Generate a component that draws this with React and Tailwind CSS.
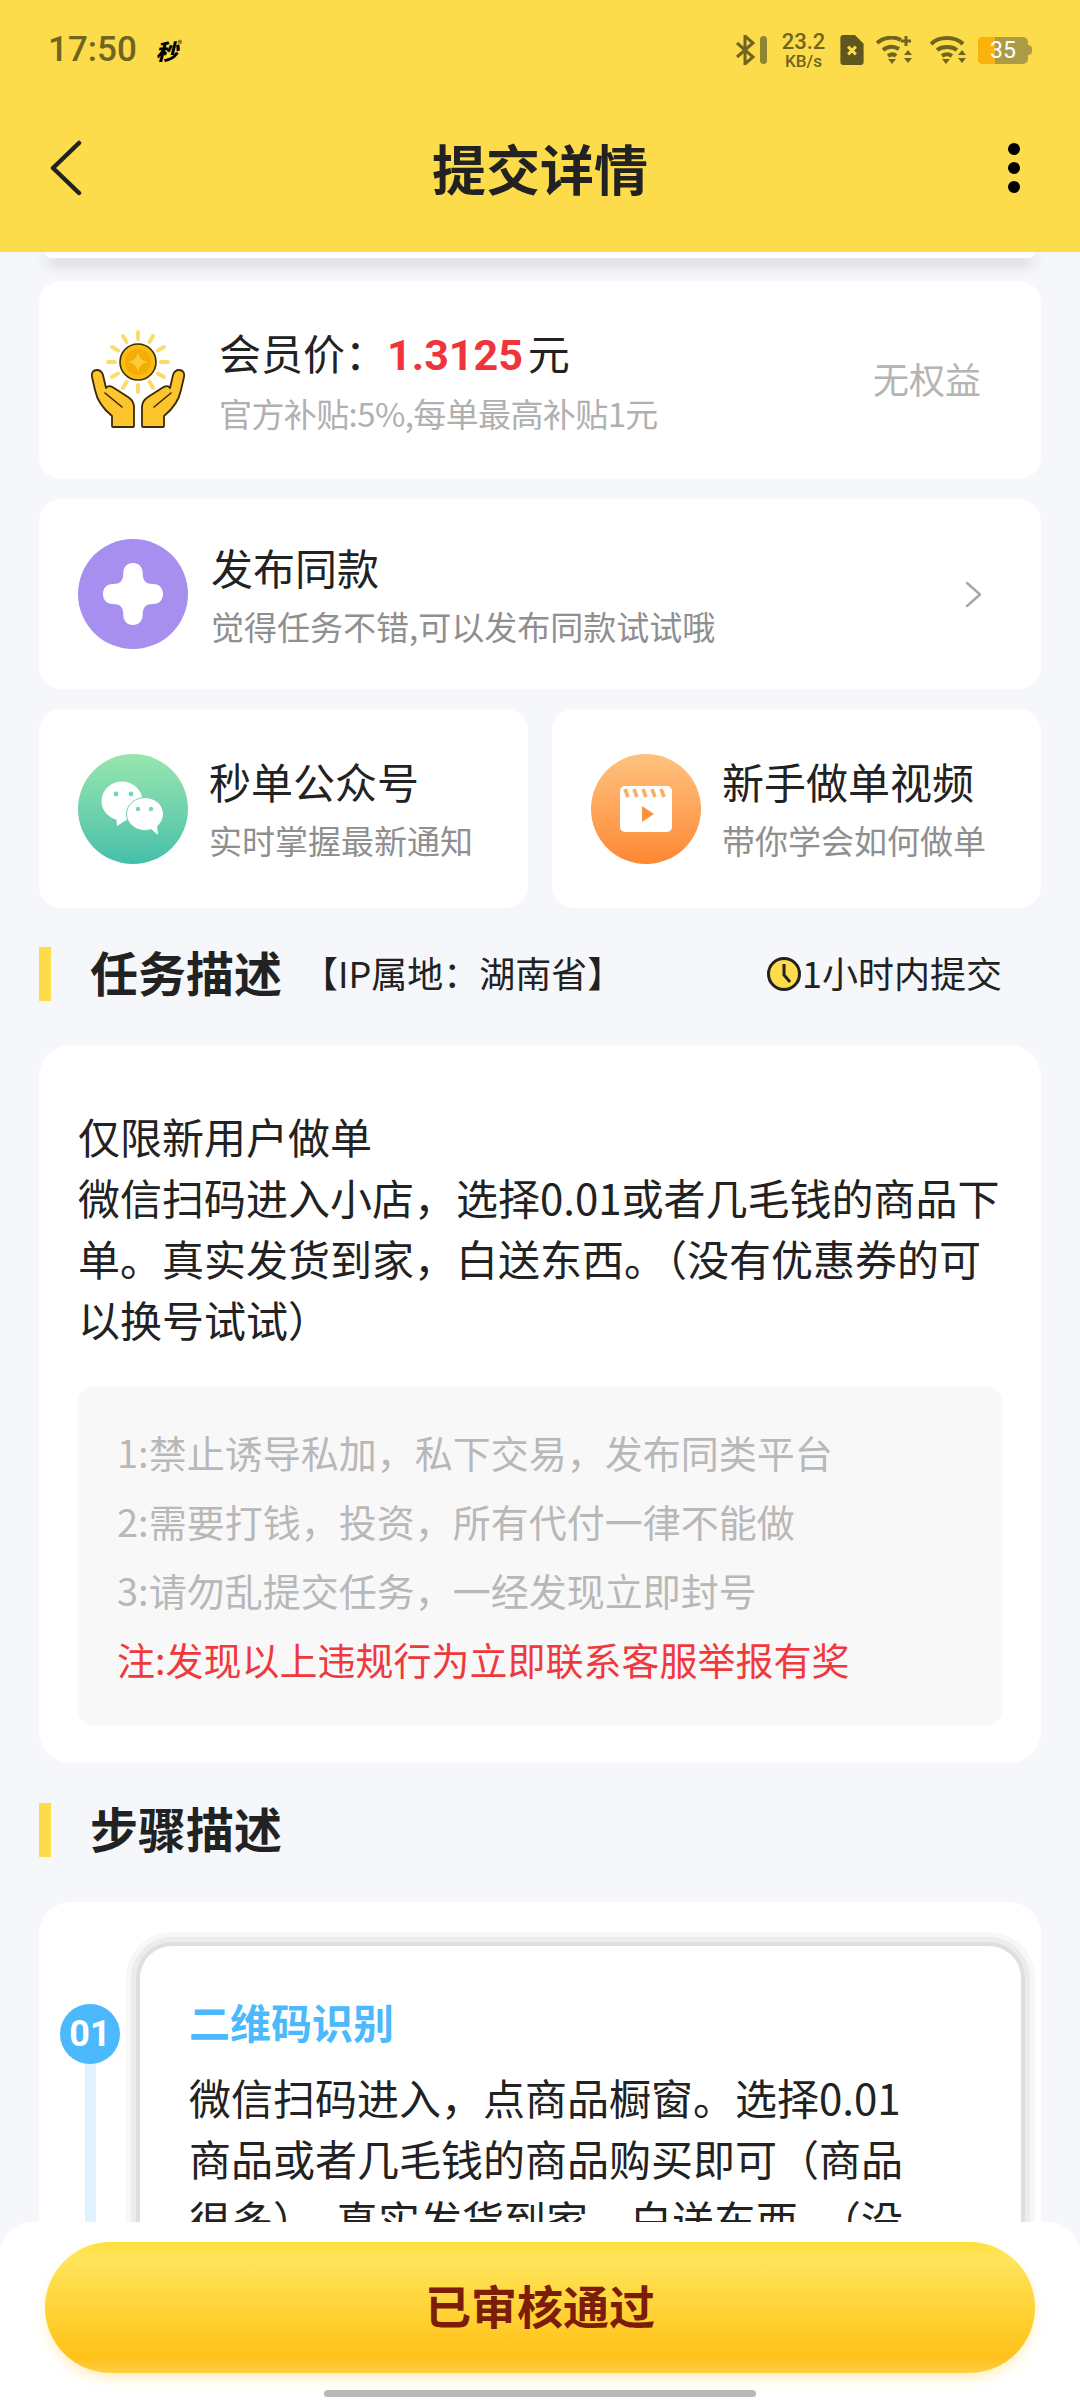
import React from "react";

const RAY_ANGLES = [0, 30, 60, 90, 120, 150, 180, 210, 240, 270, 300, 330];

const HAND_PATH =
  "M7 40C3 40 1 43 2 47L5 60C7 70 12 78 22 86L22 96Q22 97 23 97L43 97Q44 97 44 96L44 77C44 72 41 69 38 67L24 58C20 55 17 56 16 58L13 45C12 42 10 40 7 40Z";

const HandsIcon = () => (
  <svg width="96" height="100" viewBox="0 0 96 100" className="shrink-0">
    {RAY_ANGLES.map((a) => (
      <path key={a} d="M48 2v7" transform={`rotate(${a} 48 32)`} stroke="#fbdc6a" strokeWidth="4" strokeLinecap="round" />
    ))}
    <circle cx="48" cy="32" r="18" fill="#f7bd12" stroke="#3d2a05" strokeWidth="1.6" />
    <circle cx="48" cy="32" r="13" fill="#f4ad06" />
    <path d="M48 22c1 6 4 9 10 10-6 1-9 4-10 10-1-6-4-9-10-10 6-1 9-4 10-10z" fill="#fbcb3a" />
    <path d={HAND_PATH} fill="#fcc52e" stroke="#3d2a05" strokeWidth="1.8" strokeLinejoin="round" />
    <path d="M15 63L32 77" fill="none" stroke="#3d2a05" strokeWidth="1.6" strokeLinecap="round" />
    <g transform="translate(96 0) scale(-1 1)">
      <path d={HAND_PATH} fill="#fcc52e" stroke="#3d2a05" strokeWidth="1.8" strokeLinejoin="round" />
      <path d="M15 63L32 77" fill="none" stroke="#3d2a05" strokeWidth="1.6" strokeLinecap="round" />
    </g>
  </svg>
);

const PlusIcon = () => (
  <div className="w-[110px] h-[110px] rounded-full bg-[#a78fef] flex items-center justify-center shrink-0">
    <svg width="60" height="62" viewBox="0 0 62 62" preserveAspectRatio="none">
      <path d="M31 0c6 0 10 4 10 10 0 8 3 11 11 11 6 0 10 4 10 10s-4 10-10 10c-8 0-11 3-11 11 0 6-4 10-10 10s-10-4-10-10c0-8-3-11-11-11-6 0-10-4-10-10s4-10 10-10c8 0 11-3 11-11 0-6 4-10 10-10z" fill="#fff" />
    </svg>
  </div>
);

const WechatIcon = () => (
  <div className="w-[110px] h-[110px] rounded-full bg-gradient-to-b from-[#97e6ae] to-[#44bfab] flex items-center justify-center shrink-0">
    <svg width="64" height="56" viewBox="0 0 64 56">
      <ellipse cx="21" cy="20" rx="20.500" ry="19.500" fill="#fff" />
      <path d="M15 34l1 11 11-7z" fill="#fff" />
      <circle cx="15" cy="13" r="2.400" fill="#75d5ae" />
      <circle cx="30" cy="13" r="2.400" fill="#75d5ae" />
      <ellipse cx="44" cy="33" rx="18.500" ry="16.500" fill="#fff" stroke="#6ed0ae" strokeWidth="1" />
      <path d="M49 47l8 7-1-10z" fill="#fff" />
      <circle cx="37" cy="28" r="2.200" fill="#75d5ae" />
      <circle cx="50" cy="28" r="2.200" fill="#75d5ae" />
    </svg>
  </div>
);

const VideoIcon = () => (
  <div className="w-[110px] h-[110px] rounded-full bg-gradient-to-b from-[#fdc27e] to-[#fd8730] flex items-center justify-center shrink-0">
    <svg width="52" height="46" viewBox="0 0 52 46">
      <rect width="52" height="46" rx="5" fill="#fff" />
      <path d="M5 3l3 8M14 3l3 8M23 3l3 8M32 3l3 8M41 3l3 8" stroke="#fdae66" strokeWidth="3.600" />
      <path d="M22 20l12 8-12 8z" fill="#fd9340" />
    </svg>
  </div>
);

const ClockIcon = () => (
  <svg width="36" height="36" viewBox="0 0 36 36" className="shrink-0">
    <circle cx="18" cy="18" r="15.500" fill="#fcdc4b" stroke="#222" strokeWidth="3" />
    <path d="M18 8v11l6 7" fill="none" stroke="#222" strokeWidth="3" />
  </svg>
);

const SectionTitle = ({ children, extra }) => (
  <div className="flex items-center h-[54px]">
    <div className="w-3 h-[54px] bg-[#fcdc4b] shrink-0" />
    <div className="ml-[39px] pb-[6px] text-[48px] font-bold text-[#222] leading-none">{children}</div>
    {extra}
  </div>
);

const Wifi = ({ plus }) => (
  <svg width="37" height="28" viewBox="0 0 37 28" fill="none" stroke="#6f6420" strokeWidth="4">
    {plus ? (
      <>
        <path d="M1 7C8 1 18 0 25 4M7 14c5-4 11-4 16-1M12 20c3-2 6-2 8 0" />
        <path d="M30 0v10M25 5h10" strokeWidth="3" />
      </>
    ) : (
      <path d="M1 8C9 0 25 0 33 8M7 14c5-4 15-4 20 0M12 20c3-2 7-2 10 0" />
    )}
    <path d="M12 23h8l-4 5z" fill="#6f6420" stroke="none" />
    <path d="M28 19h8l-4-5zM28 22h8l-4 5z" fill="#6f6420" stroke="none" />
  </svg>
);

const StatusBar = () => (
  <div className="h-[100px] pl-[48px] pr-[48px] flex items-center justify-between text-[#6f6420]">
    <div className="flex items-center">
      <span className="text-[35px] font-medium font-['Roboto',sans-serif]">17:50</span>
      <span className="ml-[19px] flex items-start text-[22px] font-black italic text-black leading-none">
        秒<span className="text-[9px] font-normal not-italic">®</span>
      </span>
    </div>
    <div className="flex items-center">
      <svg width="31" height="30" viewBox="0 0 31 30" fill="none" stroke="#6f6420" strokeWidth="3">
        <path d="M1 8l16 14-8 7V1l8 7L1 22" />
        <rect x="24" y="1" width="7" height="28" rx="3.500" fill="#8f8430" stroke="none" />
      </svg>
      <div className="ml-[16px] w-[41px] flex flex-col items-center font-['Roboto',sans-serif] font-medium leading-none">
        <span className="text-[22px]">23.2</span>
        <span className="text-[17px]">KB/s</span>
      </div>
      <svg width="24" height="30" viewBox="0 0 24 31" className="ml-[16px]">
        <path d="M3 0h12l9 9v19a3 3 0 0 1-3 3H3a3 3 0 0 1-3-3V3a3 3 0 0 1 3-3z" fill="#5f5620" />
        <path d="M8 12l8 8M16 12l-8 8" stroke="#fcdc4b" strokeWidth="3" />
      </svg>
      <div className="ml-[12px]">
        <Wifi plus />
      </div>
      <div className="ml-[17px]">
        <Wifi />
      </div>
      <div className="ml-[11px] flex items-center">
        <div className="relative w-[50px] h-[27px] rounded-[5px] overflow-hidden bg-[#ab9b45] flex">
          <div className="w-[17px] bg-[#fbb20b]" />
          <span className="absolute inset-0 flex items-center justify-center text-[23px] text-white font-['Roboto',sans-serif] leading-none">35</span>
        </div>
        <div className="w-[4px] h-[10px] bg-[#ab9b45] rounded-r-sm" />
      </div>
    </div>
  </div>
);

export default function App() {
  return (
    <div className="w-[1080px] h-[2400px] overflow-hidden flex flex-col bg-[#f6f7fb] font-['Noto_Sans_CJK_SC','Noto_Sans',sans-serif]">
      <header className="relative z-10 h-[252px] shrink-0 bg-[#fcdc4b]">
        <StatusBar />
        <div className="relative h-[128px] flex items-center justify-center mt-[4px]">
          <svg width="32" height="56" viewBox="0 0 32 56" fill="none" stroke="#222" strokeWidth="4.500" strokeLinecap="round" strokeLinejoin="round" className="absolute left-[50px]">
            <path d="M29 3L3 28l26 25" />
          </svg>
          <h1 className="text-[54px] font-bold text-[#222] leading-none">提交详情</h1>
          <div className="absolute right-[60px] flex flex-col gap-[7px]">
            <span className="w-3 h-3 rounded-full bg-black block" />
            <span className="w-3 h-3 rounded-full bg-black block" />
            <span className="w-3 h-3 rounded-full bg-black block" />
          </div>
        </div>
      </header>

      <main className="flex-1 min-h-0 overflow-hidden px-[39px]">
        {/* bottom of the scrolled-away card */}
        <div className="mx-[6px] h-[6px] bg-white rounded-b-[16px] shadow-[0_6px_14px_rgba(0,0,0,0.22)]" />

        <div className="mt-[23px] h-[198px] bg-white rounded-[22px] flex items-center pl-[51px] pr-[60px]">
          <HandsIcon />
          <div className="ml-[33px] flex-1 min-w-0">
            <div className="text-[42px] leading-[60px] -mt-[2px] text-[#222] flex items-baseline">
              会员价：
              <span className="text-[43px] font-bold text-[#f0343c] font-['Roboto',sans-serif]">1.3125</span>
              <span className="ml-[5px]">元</span>
            </div>
            <div className="text-[33px] leading-[48px] mt-[4px] text-[#b0b0b0] tracking-[-0.6px]">官方补贴:5%,每单最高补贴1元</div>
          </div>
          <span className="text-[36px] pb-[5px] text-[#b4b4b4]">无权益</span>
        </div>

        <div className="mt-[20px] h-[190px] bg-white rounded-[22px] flex items-center pl-[39px] pr-[59px]">
          <PlusIcon />
          <div className="ml-[23px] flex-1">
            <div className="text-[42px] leading-[60px] -mt-[2px] text-[#222]">发布同款</div>
            <div className="text-[33px] leading-[48px] mt-[5px] text-[#8f8f8f]">觉得任务不错,可以发布同款试试哦</div>
          </div>
          <svg width="17" height="27" viewBox="0 0 17 27" fill="none" stroke="#a8a8a8" strokeWidth="2.500" strokeLinecap="round" strokeLinejoin="round">
            <path d="M2 2l13 11.500L2 25" />
          </svg>
        </div>

        <div className="mt-[20px] grid grid-cols-2 gap-[24px]">
          <div className="h-[199px] bg-white rounded-[22px] flex items-center pl-[39px]">
            <WechatIcon />
            <div className="ml-[21px]">
              <div className="text-[42px] leading-[60px] -mt-[3px] text-[#222]">秒单公众号</div>
              <div className="text-[33px] leading-[48px] mt-[5px] text-[#8f8f8f]">实时掌握最新通知</div>
            </div>
          </div>
          <div className="h-[199px] bg-white rounded-[22px] flex items-center pl-[39px]">
            <VideoIcon />
            <div className="ml-[21px]">
              <div className="text-[42px] leading-[60px] -mt-[3px] text-[#222]">新手做单视频</div>
              <div className="text-[33px] leading-[48px] mt-[5px] text-[#8f8f8f]">带你学会如何做单</div>
            </div>
          </div>
        </div>

        <div className="mt-[39px]">
          <SectionTitle
            extra={
              <>
                <span className="ml-[20px] pb-[5px] text-[36px] text-[#222] leading-none whitespace-nowrap">【IP属地：湖南省】</span>
                <div className="ml-auto mr-[39px] flex items-center text-[36px] text-[#222] leading-none">
                  <ClockIcon />
                  <span className="pb-[5px]">1小时内提交</span>
                </div>
              </>
            }
          >
            任务描述
          </SectionTitle>
        </div>

        <section className="mt-[44px] h-[718px] bg-white rounded-[32px] px-[39px] pt-[60px]">
          <p className="text-[42px] leading-[61px] text-[#222]">
            仅限新用户做单
            <br />
            微信扫码进入小店，选择0.01或者几毛钱的商品下单。真实发货到家，白送东西。（没有优惠券的可以换号试试）
          </p>
          <div className="mt-[37px] h-[340px] bg-[#f8f8f8] rounded-[16px] px-[39px] pt-[31px] text-[38px] leading-[69px] text-[#b8b8b8]">
            <div>1:禁止诱导私加，私下交易，发布同类平台</div>
            <div>2:需要打钱，投资，所有代付一律不能做</div>
            <div>3:请勿乱提交任务，一经发现立即封号</div>
            <div className="text-[#f0393c]">注:发现以上违规行为立即联系客服举报有奖</div>
          </div>
        </section>

        <div className="mt-[40px]">
          <SectionTitle>步骤描述</SectionTitle>
        </div>

        <section className="mt-[45px] h-[600px] bg-white rounded-[32px] flex pl-[21px] pr-[20px] pt-[44px]">
          <div className="w-[60px] shrink-0 flex flex-col items-center pt-[58px]">
            <div className="w-[60px] h-[60px] rounded-full bg-[#4cb9fd] flex items-center justify-center text-white text-[36px] font-bold font-['Roboto',sans-serif] leading-none">
              01
            </div>
            <div className="w-[11px] flex-1 bg-[#def2ff]" />
          </div>
          <div className="ml-[20px] flex-1 h-[500px] bg-white rounded-[32px] shadow-[0_0_0_4px_#dfdfdf,0_0_0_9px_#ececec,0_0_0_14px_#f7f7f7] pl-[49px] pr-[111px] pt-[45px]">
            <div className="text-[41px] leading-[60px] font-bold text-[#4cb9fd]">二维码识别</div>
            <p className="mt-[15px] text-[42px] leading-[61px] text-[#222]">
              微信扫码进入，点商品橱窗。选择0.01商品或者几毛钱的商品购买即可（商品很多），真实发货到家，白送东西。（没有优惠券的可以换号试试）
            </p>
          </div>
        </section>
      </main>

      {/* action bar */}
      <div className="relative z-20 h-[178px] shrink-0 bg-white rounded-t-[32px] px-[45px] pt-[20px]">
        <button className="w-[990px] h-[131px] rounded-full bg-[linear-gradient(180deg,#ffe03a_0%,#ffe55c_12%,#ffd233_55%,#ffc119_88%,#ffcf45_100%)] shadow-[0_6px_12px_rgba(255,215,90,0.35)] pb-[6px] text-[46px] font-bold text-[#7c1d0c]">
          已审核通过
        </button>
        <div className="mt-[17px] mx-auto w-[432px] h-[7px] rounded-full bg-[#b9b9b9]" />
      </div>
    </div>
  );
}
